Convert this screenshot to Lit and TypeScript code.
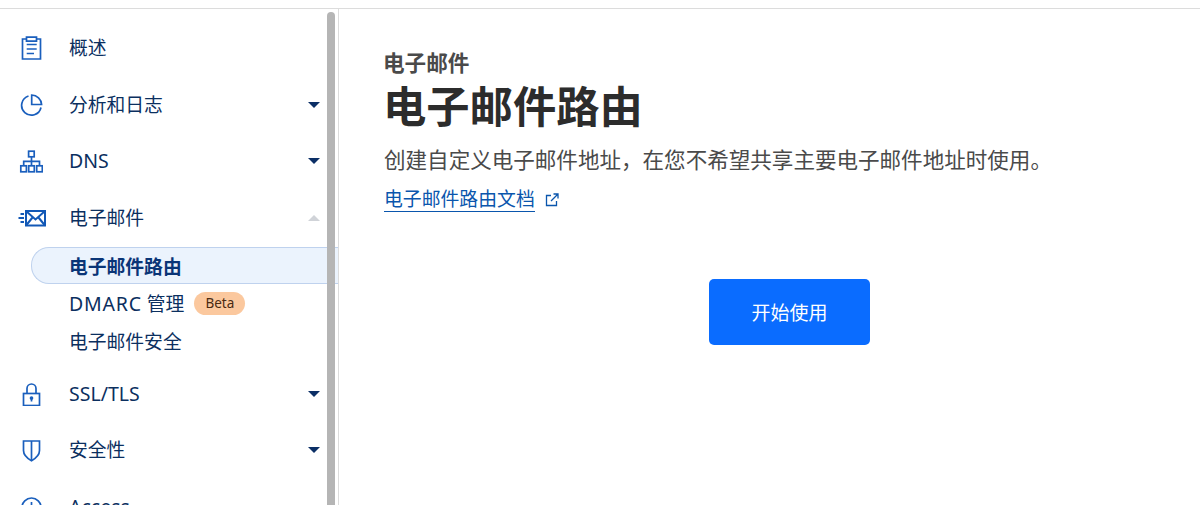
import { LitElement, html, css, svg } from "lit";
import { customElement } from "lit/decorators.js";

const icons: Record<string, unknown> = {
  overview: svg`<path d="M7.5 3H3.5V23H21.5V3H17.5" /><path d="M7.5 1.2H17.5V5.2H7.5Z" /><path d="M7.7 8.5H17.7M7.7 13H17.7M7.7 17.5H15" />`,
  analytics: svg`<path d="M9.5 3A9.8 9.8 0 1 0 22 14.5" /><path d="M12.7 2A10 10 0 0 1 22.6 11.5H12.7Z" />`,
  dns: svg`<rect x="9.6" y="2.2" width="5.6" height="5.6" /><path d="M12.5 8V16.8M4.7 16.8V12.3H20.5V16.8" /><rect x="1.8" y="16.8" width="5.6" height="6" /><rect x="9.7" y="16.8" width="5.6" height="6" /><rect x="17.7" y="16.8" width="5.6" height="6" />`,
  lock: svg`<rect x="4.5" y="11.5" width="16" height="12" /><path d="M8 11.5V6.5A4.5 4.5 0 0 1 17 6.5V11.5" /><circle cx="12.5" cy="16" r="1" fill="currentColor" /><path d="M12.5 16V19.5" />`,
  shield: svg`<path d="M4.5 3H20.5V12.5C20.5 17.5 16.5 20.5 12.5 22.8C8.5 20.5 4.5 17.5 4.5 12.5Z" /><path d="M12.5 3V22" />`,
  access: svg`<circle cx="12.5" cy="12.5" r="9.5" /><path d="M12.5 7V12" />`,
};

const ico = (name: string) =>
  html`<svg class="ico" viewBox="0 0 24 24" fill="none" stroke="currentColor" stroke-width="1.7">${icons[name]}</svg>`;

@customElement("app-root")
export class AppRoot extends LitElement {
  static styles = css`
    :host {
      display: flex;
      flex-direction: column;
      width: 1200px;
      height: 505px;
      overflow: hidden;
      background: #fff;
      font-family: "Noto Sans", "Noto Sans CJK SC", sans-serif;
      font-size: 18.8px;
      color: #0b2f5f;
    }
    .top { height: 8px; flex: none; border-bottom: 1px solid #dcdcdc; }
    .body { display: flex; flex: 1; min-height: 0; }
    .side {
      position: relative;
      width: 339px;
      flex: none;
      padding-top: 11px;
      box-sizing: border-box;
      border-right: 1px solid #dcdcdc;
      overflow: hidden;
    }
    .thumb {
      position: absolute;
      left: 327px;
      top: 3px;
      width: 8px;
      height: 520px;
      border-radius: 4px 4px 0 0;
      background: #b5b5b5;
    }
    .row {
      display: flex;
      align-items: center;
      height: 56.5px;
      padding-left: 20px;
    }
    .row .lead { width: 49px; flex: none; display: flex; align-items: center; }
    .ico { width: 24px; height: 24px; color: #1a5fbd; display: block; margin-left: -1px; }
    .mail { width: 30px; height: 22px; color: #1258b6; display: block; margin-left: -3px; }
    .label { line-height: 24px; flex: 1; }
    .latin { font-size: 19.5px; }
    .wide { letter-spacing: 0.8px; }
    .caret {
      margin-right: 18px;
      width: 0;
      height: 0;
      border-left: 6px solid transparent;
      border-right: 6px solid transparent;
      border-top: 6px solid #0b2f66;
    }
    .caret.up { border-top: none; border-bottom: 6px solid #d0d3d8; }
    .sub { margin-top: 1px; margin-bottom: 5.5px; }
    .sub-row {
      display: flex;
      align-items: center;
      gap: 10px;
      height: 38px;
      padding-left: 69px;
      box-sizing: border-box;
    }
    .sub-row.on {
      margin-left: 31px;
      padding-left: 37px;
      height: 37px;
      font-weight: 700;
      color: #0a3577;
      background: #ebf3fd;
      border: 1px solid #bfd2ee;
      border-right: none;
      border-radius: 18px 0 0 18px;
    }
    .beta {
      display: flex;
      align-items: center;
      justify-content: center;
      width: 51px;
      height: 23px;
      border-radius: 12px;
      background: #fbc89e;
      color: #4a2a12;
      font-size: 13.5px;
    }
    .main { flex: 1; padding: 38px 0 0 45px; color: #4a4a4a; }
    .kicker { font-size: 21.6px; font-weight: 700; line-height: 32px; margin-left: -1px; }
    h1 {
      margin: 0 0 0 -1px;
      font-size: 43.3px;
      line-height: 56px;
      font-weight: 700;
      color: #2c2c2c;
    }
    p { margin: 10px 0 0; font-size: 21.55px; line-height: 30px; }
    .link-wrap { display: flex; align-items: center; gap: 9px; margin-top: 12px; color: #0a56ad; }
    .link {
      font-size: 18.85px;
      line-height: 24px;
      border-bottom: 1px solid #0a56ad;
    }
    .ext { width: 16px; height: 16px; display: block; }
    .cta-row { display: flex; margin-top: 67px; padding-left: 325px; }
    .cta {
      display: flex;
      align-items: center;
      justify-content: center;
      width: 161px;
      height: 66px;
      border-radius: 5px;
      background: #0a6cff;
      color: #fff;
      font-size: 19px;
    }
  `;

  private row(icon: unknown, label: unknown, caret: "" | "down" | "up") {
    return html`<div class="row">
      <span class="lead">${icon}</span>
      <span class="label">${label}</span>
      ${caret ? html`<span class="caret ${caret === "up" ? "up" : ""}"></span>` : ""}
    </div>`;
  }

  render() {
    const mail = html`<svg class="mail" viewBox="0 0 30 22" fill="none" stroke="currentColor" stroke-width="2">
      <rect x="9" y="4" width="19" height="14.5" />
      <path d="M9 4L18.5 12.5L28 4M9 18.5L15.5 10.5M28 18.5L21.5 10.5" />
      <path d="M3.5 7H7M1.5 11H7M3.5 15H7" />
    </svg>`;
    const latin = (t: string) => html`<span class="latin">${t}</span>`;
    return html`
      <div class="top"></div>
      <div class="body">
        <nav class="side">
          ${this.row(ico("overview"), "概述", "")}
          ${this.row(ico("analytics"), "分析和日志", "down")}
          ${this.row(ico("dns"), latin("DNS"), "down")}
          ${this.row(mail, "电子邮件", "up")}
          <div class="sub">
            <div class="sub-row on">电子邮件路由</div>
            <div class="sub-row"><span><span class="latin wide">DMARC</span> 管理</span><span class="beta">Beta</span></div>
            <div class="sub-row">电子邮件安全</div>
          </div>
          ${this.row(ico("lock"), latin("SSL/TLS"), "down")}
          ${this.row(ico("shield"), "安全性", "down")}
          ${this.row(ico("access"), latin("Access"), "")}
          <div class="thumb"></div>
        </nav>
        <main class="main">
          <div class="kicker">电子邮件</div>
          <h1>电子邮件路由</h1>
          <p>创建自定义电子邮件地址，在您不希望共享主要电子邮件地址时使用。</p>
          <div class="link-wrap">
            <span class="link">电子邮件路由文档</span>
            <svg class="ext" viewBox="0 0 16 16" fill="none" stroke="currentColor" stroke-width="1.3">
              <path d="M7 3.5H2.5V13.5H12.5V9" /><path d="M7 9L14 2M9.5 2H14V6.5" />
            </svg>
          </div>
          <div class="cta-row"><div class="cta">开始使用</div></div>
        </main>
      </div>
    `;
  }
}
